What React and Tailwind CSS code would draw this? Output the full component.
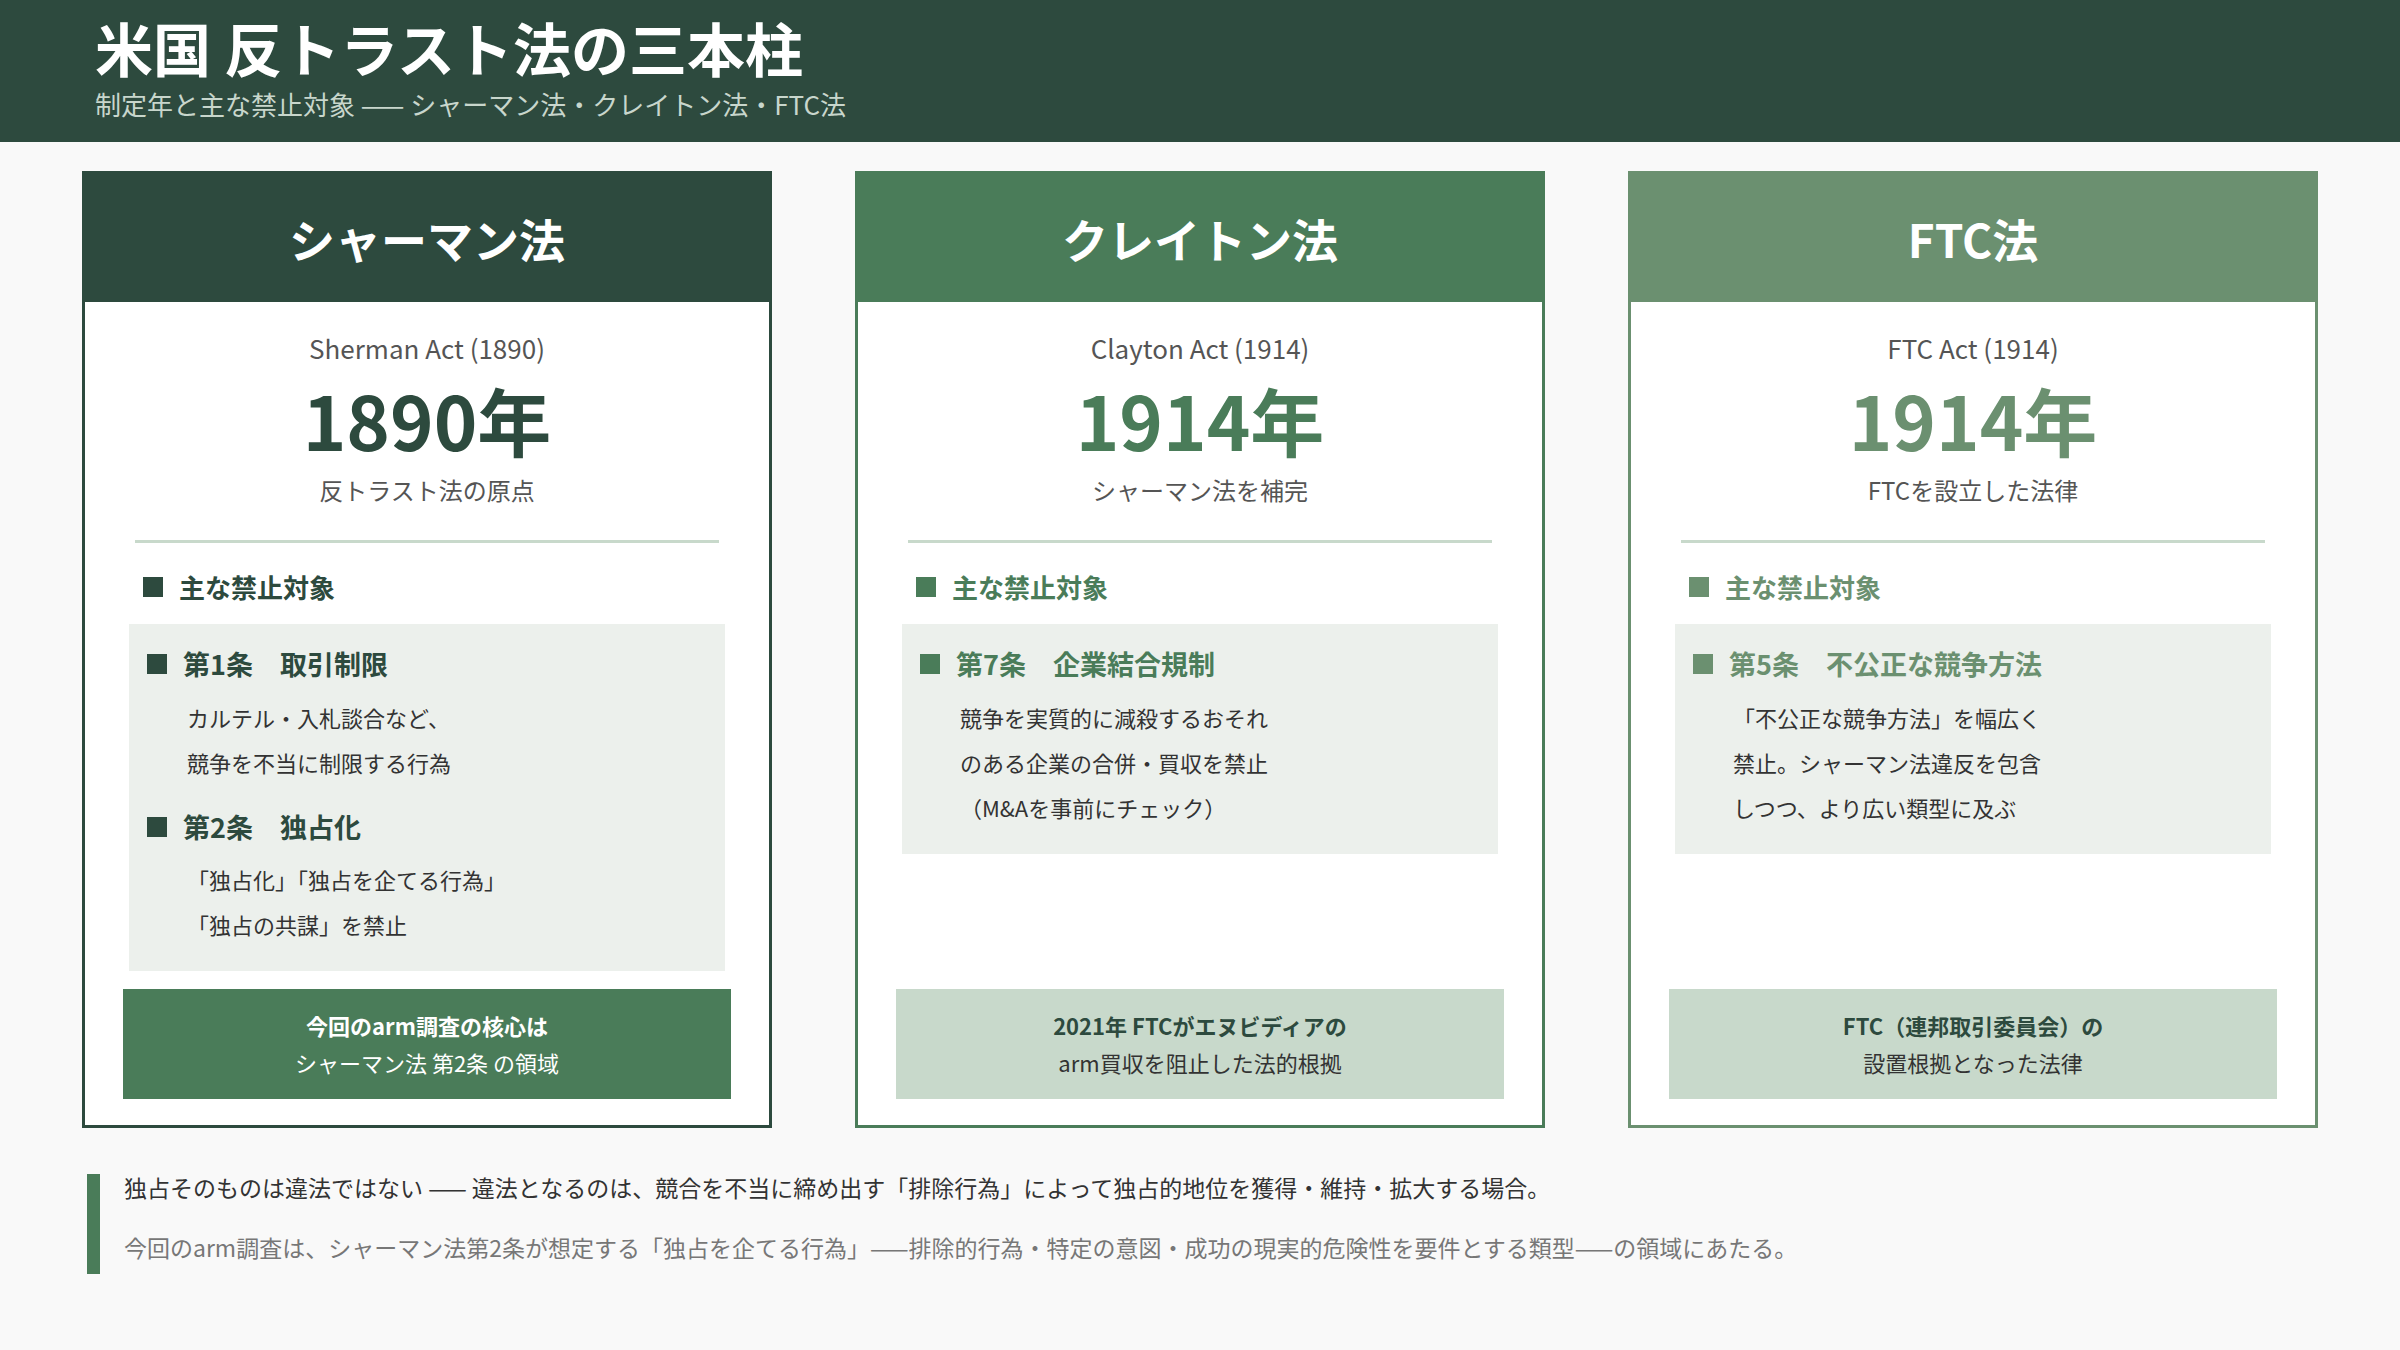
const F = { fontFamily: '"Noto Sans CJK JP", "Noto Sans", sans-serif' };

const cards = [
  {
    title: 'シャーマン法', act: 'Sherman Act (1890)', year: '1890年', desc: '反トラスト法の原点',
    c: '#2d4a3e', border: 'border-[#2d4a3e]', bg: 'bg-[#2d4a3e]', text: 'text-[#2d4a3e]', sq: 'bg-[#2d4a3e]',
    items: [
      { h: '第1条　取引制限', lines: ['カルテル・入札談合など、', '競争を不当に制限する行為'] },
      { h: '第2条　独占化', lines: ['「独占化」「独占を企てる行為」', '「独占の共謀」を禁止'] },
    ],
    foot: ['今回のarm調査の核心は', 'シャーマン法 第2条 の領域'], dark: true,
  },
  {
    title: 'クレイトン法', act: 'Clayton Act (1914)', year: '1914年', desc: 'シャーマン法を補完',
    border: 'border-[#4a7c59]', bg: 'bg-[#4a7c59]', text: 'text-[#4a7c59]', sq: 'bg-[#4a7c59]',
    items: [{ h: '第7条　企業結合規制', lines: ['競争を実質的に減殺するおそれ', 'のある企業の合併・買収を禁止', '（M&Aを事前にチェック）'] }],
    foot: ['2021年 FTCがエヌビディアの', 'arm買収を阻止した法的根拠'],
  },
  {
    title: 'FTC法', act: 'FTC Act (1914)', year: '1914年', desc: 'FTCを設立した法律',
    border: 'border-[#6b9070]', bg: 'bg-[#6b9070]', text: 'text-[#6b9070]', sq: 'bg-[#6b9070]',
    items: [{ h: '第5条　不公正な競争方法', lines: ['「不公正な競争方法」を幅広く', '禁止。シャーマン法違反を包含', 'しつつ、より広い類型に及ぶ'] }],
    foot: ['FTC（連邦取引委員会）の', '設置根拠となった法律'],
  },
];

function Card({ d }) {
  return (
    <div className={`flex flex-col border-[3px] ${d.border} bg-white`}>
      <div className={`${d.bg} h-[128px] flex items-center justify-center text-white text-[46px] font-bold`}>{d.title}</div>
      <div className="flex flex-col flex-1 px-[38px] pb-[26px]">
        <div className="text-center text-[26px] text-[#555] mt-[26px] leading-[40px]">{d.act}</div>
        <div className={`text-center text-[74px] font-bold leading-[90px] mt-[6px] ${d.text}`}>{d.year}</div>
        <div className="text-center text-[24px] text-[#555] mt-[8px] leading-[36px]">{d.desc}</div>
        <div className="h-[3px] bg-[#c8d9cb] mx-[12px] mt-[32px]" />
        <div className={`flex items-center gap-[16px] mt-[24px] ml-[20px] text-[26px] font-bold ${d.text}`}>
          <span className={`w-[20px] h-[20px] ${d.sq}`} />主な禁止対象
        </div>
        <div className="bg-[#ecf0ec] mx-[6px] mt-[18px] px-[18px] pt-[20px] pb-[24px] flex flex-col gap-[22px]">
          {d.items.map((it) => (
            <div key={it.h}>
              <div className={`flex items-center gap-[16px] text-[27px] font-bold ${d.text}`}>
                <span className={`w-[20px] h-[20px] ${d.sq}`} />{it.h}
              </div>
              <div className="pl-[40px] mt-[10px] text-[22px] text-[#333] leading-[45px]">
                {it.lines.map((l) => <div key={l}>{l}</div>)}
              </div>
            </div>
          ))}
        </div>
        <div className="flex-1" />
        <div className={`h-[110px] flex flex-col items-center justify-center text-[22px] leading-[37px] ${d.dark ? 'bg-[#4a7c59] text-white' : 'bg-[#c8d9cb] text-[#333]'}`}>
          <div className={`font-bold ${d.dark ? '' : 'text-[#2d4a3e]'}`}>{d.foot[0]}</div>
          <div>{d.foot[1]}</div>
        </div>
      </div>
    </div>
  );
}

export default function App() {
  return (
    <div style={F} className="w-[2400px] h-[1350px] bg-[#f9f9f9] flex flex-col">
      <div className="h-[142px] bg-[#2d4a3e] px-[95px] pt-[8px]">
        <div className="text-white text-[58px] font-bold leading-[78px]">米国 反トラスト法の三本柱</div>
        <div className="text-[#c8d6cc] text-[26px] leading-[36px]">制定年と主な禁止対象 —— シャーマン法・クレイトン法・FTC法</div>
      </div>
      <div className="grid grid-cols-3 gap-[83px] px-[82px] mt-[29px] h-[957px]">
        {cards.map((d) => <Card key={d.title} d={d} />)}
      </div>
      <div className="flex gap-[24px] mx-[87px] mt-[46px] h-[100px]">
        <div className="w-[13px] bg-[#4a7c59]" />
        <div className="text-[23px] leading-[60px] -mt-[17px]">
          <div className="text-[#333]">独占そのものは違法ではない —— 違法となるのは、競合を不当に締め出す「排除行為」によって独占的地位を獲得・維持・拡大する場合。</div>
          <div className="text-[#777]">今回のarm調査は、シャーマン法第2条が想定する「独占を企てる行為」——排除的行為・特定の意図・成功の現実的危険性を要件とする類型——の領域にあたる。</div>
        </div>
      </div>
    </div>
  );
}
